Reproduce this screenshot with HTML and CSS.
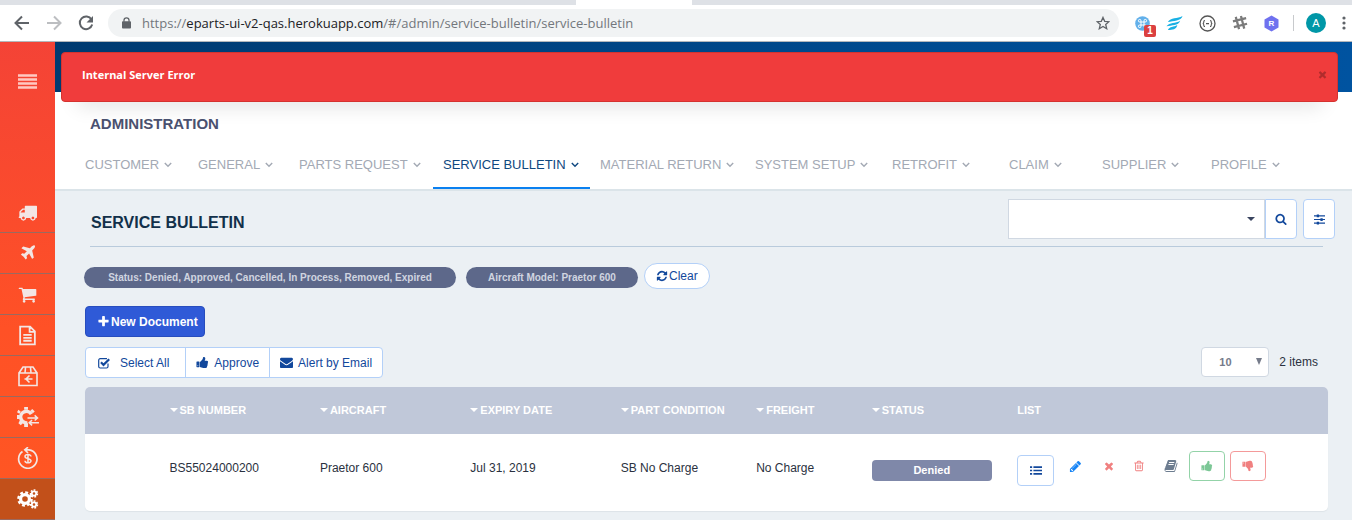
FILE: index.html
```html
<!DOCTYPE html>
<html lang="en">
<head>
<meta charset="utf-8">
<title>Service Bulletin</title>
<link rel="stylesheet" href="styles.css">
</head>
<body>
<svg class="defs" width="0" height="0" aria-hidden="true">
  <symbol id="i-truck" viewBox="0 0 1792 1792"><path d="M640 1408q0-52-38-90t-90-38-90 38-38 90 38 90 90 38 90-38 38-90zm-384-512h384v-256h-158q-13 0-22 9l-195 195q-9 9-9 22v30zm1280 512q0-52-38-90t-90-38-90 38-38 90 38 90 90 38 90-38 38-90zm256-1088v1024q0 15-4 26.500t-13.500 18.500-16.500 11.500-23.500 6-22.500 2-25.500 0-22.500-.5q0 106-75 181t-181 75-181-75-75-181h-384q0 106-75 181t-181 75-181-75-75-181h-64q-3 0-22.500.5t-25.500 0-22.500-2-23.500-6-16.500-11.500-13.500-18.500-4-26.500q0-26 19-45t45-19v-320q0-8-.5-35t0-38 2.500-34.500 6.500-37 14-30.500 22.500-30l198-198q19-19 50.500-32t58.500-13h160v-192q0-26 19-45t45-19h1024q26 0 45 19t19 45z"/></symbol>
  <symbol id="i-plane" viewBox="0 0 1792 1792"><path d="M1568 160q44 52 12 148t-108 172l-161 161 160 696q5 19-12 33l-128 96q-7 6-19 6-4 0-7-1-15-3-21-16l-279-508-259 259 53 194q5 17-8 31l-96 96q-9 9-23 9h-2q-15-2-24-13l-189-252-252-189q-11-7-13-23-1-13 9-25l96-97q9-9 23-9 6 0 8 1l194 53 259-259-508-279q-14-8-17-24-2-16 9-27l128-128q14-13 30-8l665 159 160-160q76-76 172-108t148 12z"/></symbol>
  <symbol id="i-cart" viewBox="0 0 1792 1792"><path d="M704 1536q0 52-38 90t-90 38-90-38-38-90 38-90 90-38 90 38 38 90zm896 0q0 52-38 90t-90 38-90-38-38-90 38-90 90-38 90 38 38 90zm128-1088v512q0 24-16.500 42.500t-40.500 21.500l-1044 122q13 60 13 70 0 16-24 64h920q26 0 45 19t19 45-19 45-45 19h-1024q-26 0-45-19t-19-45q0-11 8-31.500t16-36 21.500-40 15.500-29.500l-177-823h-204q-26 0-45-19t-19-45 19-45 45-19h256q16 0 28.500 6.500t19.500 15.500 13 24.500 8 26 5.500 29.500 4.500 26h1201q26 0 45 19t19 45z"/></symbol>
  <symbol id="i-file" viewBox="0 0 20 20"><path d="M3 1.500h9.500L17 6v12.500H3zM12 1.500V6.500h5M6 9.500h8M6 12.300h8M6 15h8" fill="none" stroke="currentColor" stroke-width="1.700"/></symbol>
  <symbol id="i-box" viewBox="0 0 22 22"><path d="M2 8h18v12.500H2zM2 8l4-6h10l4 6M8.500 2.500L8 8M13.500 2.500L14 8M7.500 14h8M12.500 10.500L9 14l3.500 3.500" fill="none" stroke="currentColor" stroke-width="1.600"/></symbol>
  <symbol id="i-gearswap" viewBox="0 0 24 22"><path d="M16 7.500A6 6 0 1 0 12 16.500" fill="none" stroke="currentColor" stroke-width="3.600"/><path d="M8.500 3V0h4v3M15 4l2-2 2.600 2.600-2 2M5 5L2.500 3 1 5.500 3.500 7M4 8.500H1v4h3M4 14l-1.500 3 2.500 2 2.500-2.500M8.500 17v4h4v-4" fill="currentColor"/><path d="M12 11.500h10M19.500 8.800l3 2.700-3 2.700M24 16.500H14M16.800 13.800l-3 2.700 3 2.700" fill="none" stroke="currentColor" stroke-width="1.600"/></symbol>
  <symbol id="i-refund" viewBox="0 0 22 22"><path d="M5.500 4.500A9.200 9.200 0 1 0 12 2.900H7.500M11 .2L7.800 2.900 11 6" fill="none" stroke="currentColor" stroke-width="1.700"/><path d="M14 9.500c0-2.600-6-2.600-6 .1 0 2.800 6 1.300 6 4.200 0 2.800-6 2.700-6 0M11 6.800v9.800" fill="none" stroke="currentColor" stroke-width="1.500"/></symbol>
  <symbol id="i-cogs" viewBox="0 0 22 20"><g fill="none" stroke="currentColor"><circle cx="8" cy="10" r="4.400" stroke-width="3.200"/><circle cx="8" cy="10" r="6.600" stroke-width="2.400" stroke-dasharray="2.900 2.284"/><circle cx="17" cy="4.500" r="2.200" stroke-width="1.800"/><circle cx="17" cy="4.500" r="3.500" stroke-width="1.500" stroke-dasharray="1.800 1.342"/><circle cx="17" cy="15.500" r="2.200" stroke-width="1.800"/><circle cx="17" cy="15.500" r="3.500" stroke-width="1.500" stroke-dasharray="1.800 1.342"/></g></symbol>
  <symbol id="i-pencil" viewBox="0 0 1792 1792"><path d="M491 1536l91-91-235-235-91 91v107h128v128h107zm523-928q0-22-22-22-10 0-17 7l-542 542q-7 7-7 17 0 22 22 22 10 0 17-7l542-542q7-7 7-17zm-54-192l416 416-832 832h-416v-416zm683 96q0 53-37 90l-166 166-416-416 166-165q36-38 90-38 53 0 91 38l235 234q37 39 37 91z"/></symbol>
  <symbol id="i-times" viewBox="0 0 1792 1792"><path d="M1490 1322q0 40-28 68l-136 136q-28 28-68 28t-68-28l-294-294-294 294q-28 28-68 28t-68-28l-136-136q-28-28-28-68t28-68l294-294-294-294q-28-28-28-68t28-68l136-136q28-28 68-28t68 28l294 294 294-294q28-28 68-28t68 28l136 136q28 28 28 68t-28 68l-294 294 294 294q28 28 28 68z"/></symbol>
  <symbol id="i-trash" viewBox="0 0 1792 1792"><path d="M704 736v576q0 14-9 23t-23 9h-64q-14 0-23-9t-9-23v-576q0-14 9-23t23-9h64q14 0 23 9t9 23zm256 0v576q0 14-9 23t-23 9h-64q-14 0-23-9t-9-23v-576q0-14 9-23t23-9h64q14 0 23 9t9 23zm256 0v576q0 14-9 23t-23 9h-64q-14 0-23-9t-9-23v-576q0-14 9-23t23-9h64q14 0 23 9t9 23zm128 724v-948h-896v948q0 22 7 40.500t14.500 27 10.500 8.500h832q3 0 10.500-8.500t14.500-27 7-40.500zm-672-1076h448l-48-117q-7-9-17-11h-317q-10 2-17 11zm928 32v64q0 14-9 23t-23 9h-96v948q0 83-47 143.500t-113 60.500h-832q-66 0-113-58.500t-47-141.500v-952h-96q-14 0-23-9t-9-23v-64q0-14 9-23t23-9h309l70-167q15-37 54-63t79-26h320q40 0 79 26t54 63l70 167h309q14 0 23 9t9 23z"/></symbol>
  <symbol id="i-book" viewBox="0 0 1792 1792"><path d="M1703 478q40 57 18 129l-275 906q-19 64-76.500 107.500t-122.500 43.500h-923q-77 0-148.500-53.500t-99.500-131.500q-24-67-2-127 0-4 3-27t4-37q1-8-3-21.500t-3-19.500q2-11 8-21t16.500-23.500 16.500-23.500q23-38 45-91.500t30-91.500q3-10 .5-30t-.5-28q3-11 17-28t17-23q21-36 42-92t25-90q1-9-2.500-32t.5-28q4-13 22-30.500t22-22.500q19-26 42.500-84.500t27.500-96.500q1-8-3-25.500t-2-26.500q2-8 9-18t18-23 17-21q8-12 16.500-30.500t15-35 16-36 19.500-32 26.500-23.500 36-11.500 47.500 5.500l-1 3q38-9 51-9h761q74 0 114 56t18 130l-274 906q-36 119-71.500 153.500t-128.500 34.500h-869q-27 0-38 15-11 16-1 43 24 70 144 70h923q29 0 56-15.500t35-41.500l300-987q7-22 5-57 38 15 59 43zm-1064 2q-4 13 2 22.500t20 9.500h608q13 0 25.500-9.500t16.500-22.500l21-64q4-13-2-22.500t-20-9.500h-608q-13 0-25.500 9.500t-16.500 22.500zm-83 256q-4 13 2 22.500t20 9.500h608q13 0 25.500-9.500t16.500-22.500l21-64q4-13-2-22.500t-20-9.500h-608q-13 0-25.500 9.500t-16.500 22.500z"/></symbol>
  <symbol id="i-thumb" viewBox="0 0 1792 1792"><path d="M320 1344q0-26-19-45t-45-19q-27 0-45.500 19t-18.500 45q0 27 18.500 45.500t45.500 18.500q26 0 45-18.500t19-45.500zm160-512v640q0 26-19 45t-45 19h-288q-26 0-45-19t-19-45v-640q0-26 19-45t45-19h288q26 0 45 19t19 45zm1184 0q0 86-55 149 15 44 15 76 3 76-43 137 17 56 0 117-15 57-54 94 9 112-49 181-64 76-197 78h-129q-66 0-144-15.500t-121.500-29-120.500-39.500q-123-43-158-44-26-1-45-19.500t-19-44.500v-641q0-25 18-43.500t43-20.500q24-2 76-59t101-121q68-87 101-120 18-18 31-48t17.500-48.500 13.500-60.500q7-39 12.500-61t19.500-52 34-50q19-19 45-19 46 0 82.500 10.500t60 26 40 40.500 24 45 12 50 5 45 .5 39q0 38-9.500 76t-19 60-27.500 56q-3 6-10 18t-11 22-8 24h277q78 0 135 57t57 135z"/></symbol>
  <symbol id="i-refresh" viewBox="0 0 1792 1792"><path d="M1639 1056q0 5-1 7-64 268-268 434.500t-478 166.500q-146 0-282.500-55t-243.500-157l-129 129q-19 19-45 19t-45-19-19-45v-448q0-26 19-45t45-19h448q26 0 45 19t19 45-19 45l-137 137q71 66 161 102t187 36q134 0 250-65t186-179q11-17 53-117 8-23 30-23h192q13 0 22.500 9.500t9.500 22.500zm25-800v448q0 26-19 45t-45 19h-448q-26 0-45-19t-19-45 19-45l138-138q-148-137-349-137-134 0-250 65t-186 179q-11 17-53 117-8 23-30 23h-199q-13 0-22.500-9.500t-9.500-22.500v-7q65-268 270-434.500t480-166.500q146 0 284 55.500t245 156.500l130-129q19-19 45-19t45 19 19 45z"/></symbol>
  <symbol id="i-plus" viewBox="0 0 1792 1792"><path d="M1600 736v192q0 40-28 68t-68 28h-416v416q0 40-28 68t-68 28h-192q-40 0-68-28t-28-68v-416h-416q-40 0-68-28t-28-68v-192q0-40 28-68t68-28h416v-416q0-40 28-68t68-28h192q40 0 68 28t28 68v416h416q40 0 68 28t28 68z"/></symbol>
  <symbol id="i-search" viewBox="0 0 1792 1792"><path d="M1216 832q0-185-131.500-316.500t-316.500-131.500-316.500 131.500-131.500 316.500 131.500 316.500 316.500 131.500 316.500-131.500 131.500-316.500zm512 832q0 52-38 90t-90 38q-54 0-90-38l-343-342q-179 124-399 124-143 0-273.500-55.500t-225-150-150-225-55.500-273.500 55.500-273.500 150-225 225-150 273.500-55.500 273.500 55.500 225 150 150 225 55.500 273.500q0 220-124 399l343 343q37 37 37 90z"/></symbol>
  <symbol id="i-envelope" viewBox="0 0 1792 1792"><path d="M1792 710v794q0 66-47 113t-113 47h-1472q-66 0-113-47t-47-113v-794q44 49 101 87 362 246 497 345 57 42 92.500 65.500t94.500 48 110 24.500h2q51 0 110-24.500t94.500-48 92.500-65.500q170-123 498-345 57-39 100-87zm0-294q0 79-49 151t-122 123q-376 261-468 325-10 7-42.500 30.500t-54 38-52 32.500-57.500 27-50 9h-2q-23 0-50-9t-57.500-27-52-32.500-54-38-42.500-30.500q-91-64-262-182.500t-205-142.500q-62-42-117-115.500t-55-136.500q0-78 41.500-130t118.500-52h1472q65 0 112.500 47t47.500 113z"/></symbol>
  <symbol id="i-check" viewBox="0 0 12 12"><path d="M10 6.500V9.500a1.500 1.500 0 0 1-1.500 1.500H2.200A1.500 1.500 0 0 1 .7 9.500V3.200A1.500 1.500 0 0 1 2.200 1.700H9" fill="none" stroke="currentColor" stroke-width="1.200"/><path d="M3 5.300l2.500 2.600 5.700-5.700" fill="none" stroke="currentColor" stroke-width="2.200"/></symbol>
  <symbol id="i-sliders" viewBox="0 0 12 12"><path d="M0 2h12M0 6h12M0 10h12" stroke="currentColor" stroke-width="1.200"/><path d="M3 .5h2.500v3H3zM7 4.500h2.500v3H7zM3 8.500h2.500v3H3z"/></symbol>
  <symbol id="i-list" viewBox="0 0 14 12"><path d="M0 1h2.500v2H0zM4 1h10v2H4zM0 5h2.500v2H0zM4 5h10v2H4zM0 9h2.500v2H0zM4 9h10v2H4z"/></symbol>
  <symbol id="i-chevron" viewBox="0 0 8 6"><path d="M.8 1L4 4.300 7.200 1" fill="none" stroke="currentColor" stroke-width="1.400"/></symbol>
  <symbol id="i-caret" viewBox="0 0 8 4"><path d="M0 0h8L4 4z"/></symbol>
  <symbol id="i-down" viewBox="0 0 6 7"><path d="M0 0h6L3 7z"/></symbol>
</svg>

<header class="browser">
  <div class="tabstrip"><span class="tab"></span></div>
  <div class="toolbar">
    <button class="tool" aria-label="Back"><svg width="16" height="16" viewBox="0 0 16 16"><path d="M15 8H2M8 1.500L1.500 8 8 14.500" fill="none" stroke="#5f6368" stroke-width="2"/></svg></button>
    <button class="tool" aria-label="Forward"><svg width="16" height="16" viewBox="0 0 16 16"><path d="M1 8h13M8 1.500L14.500 8 8 14.500" fill="none" stroke="#bcbec1" stroke-width="2"/></svg></button>
    <button class="tool" aria-label="Reload"><svg width="16" height="16" viewBox="0 0 16 16"><path d="M13.500 4.500A6.300 6.300 0 1 0 14.200 9.500" fill="none" stroke="#5f6368" stroke-width="2"/><path d="M15 1v6.500H8.500z" fill="#5f6368"/></svg></button>
    <div class="omnibox">
      <svg width="9" height="12" viewBox="0 0 10 13"><rect x="0" y="4.500" width="10" height="8" rx="1" fill="#5f6368"/><path d="M2.200 5V3.500a2.800 2.800 0 0 1 5.600 0V5" fill="none" stroke="#5f6368" stroke-width="1.400"/></svg>
      <div class="url" role="textbox" aria-label="Address">https://<span class="host">eparts-ui-v2-qas.herokuapp.com</span>/#/admin/service-bulletin/service-bulletin</div>
      <button class="tool" aria-label="Bookmark"><svg width="14" height="14" viewBox="0 0 14 14"><path d="M7 1.400l1.700 3.900 4.200.4-3.200 2.800 1 4.200L7 10.500l-3.700 2.200 1-4.200L1.100 5.700l4.200-.4z" fill="none" stroke="#5f6368" stroke-width="1.300"/></svg></button>
    </div>
    <div class="extensions">
      <button class="tool command" aria-label="Command"><svg width="15" height="15" viewBox="0 0 15 15"><circle cx="7.500" cy="7.500" r="7.300" fill="#62b0ea"/><path d="M6 6h3v3H6zM6 6H4.800A1.300 1.300 0 1 1 6 4.800zM9 6V4.800A1.300 1.300 0 1 1 10.200 6zM9 9h1.200A1.300 1.300 0 1 1 9 10.200zM6 9v1.200A1.300 1.300 0 1 1 4.800 9z" fill="none" stroke="#fff" stroke-width="1"/></svg><span class="count">1</span></button>
      <button class="tool" aria-label="Wing"><svg width="17" height="16" viewBox="0 0 18 16"><path d="M2 7C5 1.500 12 4 17.500 .5 16 6 8 5.500 2 7zM.5 11.500C4 6.500 10 9 15 5.500 13 11 6 10 .5 11.500zM2 15.500c2-4.500 6-3 10-5.500-1 5-5 5-10 5.500z" fill="#18b0e4"/></svg></button>
      <button class="tool" aria-label="Script"><svg width="17" height="17" viewBox="0 0 17 17"><circle cx="8.500" cy="8.500" r="7.500" fill="none" stroke="#555" stroke-width="1.300"/><path d="M6 5.500q-1.300 0-1.200 1.500 0 1.300-1 1.500 1 .2 1 1.500-.1 1.500 1.200 1.500M11 5.500q1.300 0 1.200 1.500 0 1.300 1 1.500-1 .2-1 1.500.1 1.500-1.200 1.500M7 8.600h3" fill="none" stroke="#555" stroke-width="1.100"/></svg></button>
      <button class="tool" aria-label="Grid"><svg width="16" height="16" viewBox="0 0 17 17"><path d="M4 2l3.500 13M9.500 1L13 14.500M1 6.800L15 3.300M2 12.800l14-3.500" stroke="#7b7b7b" stroke-width="2.400"/></svg></button>
      <button class="tool" aria-label="R extension"><svg width="15" height="17" viewBox="0 0 15 17"><path d="M7.500.5l7 4v8l-7 4-7-4v-8z" fill="#6f71ef"/></svg><span class="hex">R</span></button>
      <span class="divider"></span>
      <button class="avatar">A</button>
      <button class="tool" aria-label="Menu"><svg width="4" height="14" viewBox="0 0 4 14"><g fill="#5f6368"><circle cx="2" cy="2" r="1.600"/><circle cx="2" cy="7" r="1.600"/><circle cx="2" cy="12" r="1.600"/></g></svg></button>
    </div>
  </div>
</header>

<div class="app">
  <nav class="sidebar" aria-label="Modules">
    <button class="menu" aria-label="Toggle menu"><svg width="19" height="15" viewBox="0 0 19 15"><path d="M0 1.500h19M0 5.500h19M0 9.500h19M0 13.500h19" stroke="#ffc9c2" stroke-width="2.600"/></svg></button>
    <a href="#truck" aria-label="Shipping"><svg width="19" height="19"><use href="#i-truck"/></svg></a>
    <a href="#plane" aria-label="Aircraft"><svg width="18" height="18"><use href="#i-plane"/></svg></a>
    <a href="#cart" aria-label="Cart"><svg width="19" height="19"><use href="#i-cart"/></svg></a>
    <a href="#file" aria-label="Documents"><svg width="21" height="21"><use href="#i-file"/></svg></a>
    <a href="#box" aria-label="Returns"><svg width="22" height="22"><use href="#i-box"/></svg></a>
    <a href="#gear" aria-label="Exchange"><svg width="23" height="21"><use href="#i-gearswap"/></svg></a>
    <a href="#refund" aria-label="Refunds"><svg width="22" height="22"><use href="#i-refund"/></svg></a>
    <a href="#admin" class="current" aria-label="Administration"><svg width="22" height="20"><use href="#i-cogs"/></svg></a>
  </nav>

  <div class="main">
    <div class="banner"></div>
    <div class="alert" role="alert"><strong>Internal Server Error</strong><button class="close" aria-label="Close"><svg width="11" height="11"><use href="#i-times"/></svg></button></div>

    <section class="admin">
      <h2>ADMINISTRATION</h2>
      <nav class="tabs" aria-label="Administration">
        <a href="#customer">CUSTOMER<svg width="8" height="6"><use href="#i-chevron"/></svg></a>
        <a href="#general">GENERAL<svg width="8" height="6"><use href="#i-chevron"/></svg></a>
        <a href="#parts">PARTS REQUEST<svg width="8" height="6"><use href="#i-chevron"/></svg></a>
        <a href="#bulletin" class="current">SERVICE BULLETIN<svg width="8" height="6"><use href="#i-chevron"/></svg></a>
        <a href="#material">MATERIAL RETURN<svg width="8" height="6"><use href="#i-chevron"/></svg></a>
        <a href="#system">SYSTEM SETUP<svg width="8" height="6"><use href="#i-chevron"/></svg></a>
        <a href="#retrofit">RETROFIT<svg width="8" height="6"><use href="#i-chevron"/></svg></a>
        <a href="#claim">CLAIM<svg width="8" height="6"><use href="#i-chevron"/></svg></a>
        <a href="#supplier">SUPPLIER<svg width="8" height="6"><use href="#i-chevron"/></svg></a>
        <a href="#profile">PROFILE<svg width="8" height="6"><use href="#i-chevron"/></svg></a>
      </nav>
    </section>

    <main class="content">
      <div class="page-head">
        <h1>SERVICE BULLETIN</h1>
        <div class="search">
          <div class="select combo"><select aria-label="Search bulletins"><option></option></select><svg width="8" height="4"><use href="#i-caret"/></svg></div>
          <button class="btn icon-btn joined" aria-label="Search"><svg width="12" height="12"><use href="#i-search"/></svg></button>
          <button class="btn icon-btn" aria-label="Filters"><svg width="11" height="11"><use href="#i-sliders"/></svg></button>
        </div>
      </div>
      <hr>
      <div class="chips">
        <span class="chip chip-status">Status: Denied, Approved, Cancelled, In Process, Removed, Expired</span>
        <span class="chip chip-model">Aircraft Model: Praetor 600</span>
        <button class="btn clear"><svg width="12" height="12"><use href="#i-refresh"/></svg>Clear</button>
      </div>
      <button class="new"><svg width="13" height="13"><use href="#i-plus"/></svg>New Document</button>
      <div class="bar">
        <div class="group">
          <button class="btn select-all"><svg width="12" height="12"><use href="#i-check"/></svg>Select All</button>
          <button class="btn"><svg width="13" height="13"><use href="#i-thumb"/></svg>Approve</button>
          <button class="btn"><svg width="13" height="13"><use href="#i-envelope"/></svg>Alert by Email</button>
        </div>
        <div class="paging">
          <div class="select size"><select id="size" aria-label="Items per page"><option>10</option></select><svg width="6" height="7"><use href="#i-down"/></svg></div>
          <label for="size">2 items</label>
        </div>
      </div>
      <table class="grid">
        <colgroup><col class="c-check"><col class="c-wide"><col class="c-wide"><col class="c-wide"><col class="c-condition"><col class="c-freight"><col class="c-status"><col></colgroup>
        <thead>
          <tr>
            <th></th>
            <th><svg width="8" height="4"><use href="#i-caret"/></svg>SB NUMBER</th>
            <th><svg width="8" height="4"><use href="#i-caret"/></svg>AIRCRAFT</th>
            <th><svg width="8" height="4"><use href="#i-caret"/></svg>EXPIRY DATE</th>
            <th><svg width="8" height="4"><use href="#i-caret"/></svg>PART CONDITION</th>
            <th><svg width="8" height="4"><use href="#i-caret"/></svg>FREIGHT</th>
            <th><svg width="8" height="4"><use href="#i-caret"/></svg>STATUS</th>
            <th>LIST</th>
          </tr>
        </thead>
        <tbody>
          <tr>
            <td></td>
            <td>BS55024000200</td>
            <td>Praetor 600</td>
            <td>Jul 31, 2019</td>
            <td>SB No Charge</td>
            <td>No Charge</td>
            <td><span class="status">Denied</span></td>
            <td>
              <div class="actions">
                <button class="btn list" aria-label="List"><svg width="12" height="11"><use href="#i-list"/></svg></button>
                <button class="act edit" aria-label="Edit"><svg width="13" height="13"><use href="#i-pencil"/></svg></button>
                <button class="act cancel" aria-label="Cancel"><svg width="12" height="12"><use href="#i-times"/></svg></button>
                <button class="act remove" aria-label="Delete"><svg width="12" height="12"><use href="#i-trash"/></svg></button>
                <button class="act book" aria-label="History"><svg width="14" height="14"><use href="#i-book"/></svg></button>
                <button class="btn vote yes" aria-label="Approve"><svg width="12" height="12"><use href="#i-thumb"/></svg></button>
                <button class="btn vote no" aria-label="Deny"><svg width="12" height="12"><use href="#i-thumb"/></svg></button>
              </div>
            </td>
          </tr>
        </tbody>
      </table>
    </main>
  </div>
</div>
</body>
</html>
```
FILE: styles.css
```css
* { box-sizing: border-box; }
body {
  margin: 0;
  font-family: "Liberation Sans", Arial, sans-serif;
  font-size: 12px;
  background: #ebf0f4;
  color: #2a3140;
}
button, select { font: inherit; color: inherit; }
button { background: none; border: 0; padding: 0; cursor: pointer; }
a { text-decoration: none; color: inherit; }
svg { display: block; fill: currentColor; flex: none; }
.defs { position: absolute; }

/* Browser bar */
.browser { background: #fff; border-bottom: 1px solid #b4b7bb; }
.tabstrip { display: flex; height: 5px; padding-left: 576px; background: #dee1e6; }
.tab { width: 116px; background: #fff; }
.toolbar { display: flex; align-items: center; height: 36px; padding: 4px 6px 4px 14px; gap: 16px; }
.tool { position: relative; display: flex; align-items: center; justify-content: center; }
.omnibox {
  flex: 1;
  display: flex;
  align-items: center;
  gap: 11px;
  height: 28px;
  margin-left: -2px;
  padding: 0 9px 0 14px;
  border-radius: 14px;
  background: #f1f3f4;
}
.url { flex: 1; font-family: "Open Sans", "Noto Sans", sans-serif; font-size: 13px; color: #73777c; white-space: nowrap; }
.host { color: #202124; }
.extensions { display: flex; align-items: center; gap: 16px; }
.count {
  position: absolute;
  left: 9px;
  top: 9px;
  width: 12px;
  height: 12px;
  border-radius: 2px;
  background: #db4040;
  color: #fff;
  font-size: 10px;
  font-weight: bold;
  line-height: 12px;
}
.hex { position: absolute; inset: 0; color: #fff; font-size: 8px; font-weight: bold; line-height: 17px; text-align: center; }
.divider { width: 1px; height: 16px; background: #c8cacd; margin: 0 -4px 0 -2px; }
.avatar { width: 20px; height: 20px; border-radius: 50%; background: #0097a7; color: #fff; font-size: 11px; line-height: 20px; }

/* Shell */
.app { display: flex; }
.sidebar { flex: none; width: 55px; background: linear-gradient(#f44336, #ff5126 60%, #ff5722); color: #f3e6e4; }
.menu { display: flex; justify-content: center; width: 100%; height: 150px; padding-top: 32px; }
.sidebar a { display: flex; align-items: center; justify-content: center; height: 41px; border-bottom: 1px solid #9a6a60; }
.sidebar .current { background: #c2501a; color: #fff; }
.main { position: relative; flex: 1; min-width: 0; }
.banner { height: 50px; background: linear-gradient(90deg, #003a70, #0053a0); }
.alert {
  position: absolute;
  top: 10px;
  left: 6px;
  right: 14px;
  height: 50px;
  display: flex;
  align-items: center;
  justify-content: space-between;
  padding: 0 9px 5px 20px;
  border: 1px solid #d5322f;
  border-radius: 4px;
  background: #f03c3c;
  color: #fff;
  font-family: "Open Sans", "Noto Sans", sans-serif;
  font-size: 11px;
  box-shadow: 0 20px 20px -16px rgba(0, 0, 0, .12);
}
.close { color: #b02c2c; }

/* Administration tabs */
.admin { background: #fff; border-bottom: 2px solid #dbe4e9; padding-top: 22px; }
.admin h2 { margin: 0 35px; font-size: 15px; line-height: 20px; color: #4a5170; }
.tabs {
  display: grid;
  grid-template-columns: 113fr 101fr 144fr 157fr 155fr 137fr 117fr 93fr 109fr 90fr;
  padding: 6px 61px 0 20px;
  font-size: 13px;
  color: #a3a9b4;
}
.tabs a { display: flex; align-items: center; gap: 5px; height: 49px; padding: 2px 0 0 10px; border-bottom: 2px solid transparent; white-space: nowrap; }
.tabs .current { color: #0f4880; border-color: #0a80f0; }

/* Page */
.content { padding: 8px 17px 8px 30px; }
.page-head { display: flex; align-items: center; justify-content: space-between; }
h1 { margin: 0 0 0 6px; font-size: 16px; line-height: 20px; color: #12304a; padding-top: 8px; }
.search { display: flex; }
.btn {
  display: inline-flex;
  align-items: center;
  justify-content: center;
  border: 1px solid #b3d0f8;
  border-radius: 4px;
  background: #fff;
  color: #12489c;
}
.select { position: relative; }
.select select { appearance: none; width: 100%; height: 100%; border: 1px solid #d0d8e2; background: #fff; }
.select svg { position: absolute; top: 50%; pointer-events: none; }
.combo { width: 257px; height: 40px; }
.combo svg { right: 10px; margin-top: -2px; color: #3a4560; }
.icon-btn { width: 32px; height: 40px; }
.joined { border-radius: 0 4px 4px 0; margin-right: 6px; }
hr { margin: 7px 12px 0 5px; border: 0; border-top: 1px solid #b9cbdc; }
.chips { display: flex; align-items: center; margin-top: 16px; }
.chip {
  height: 21px;
  border-radius: 11px;
  margin: 2px 10px 0 0;
  background: #5d688a;
  color: #d0d5e0;
  font-size: 10px;
  font-weight: bold;
  line-height: 21px;
  text-align: center;
}
.chip-status { width: 372px; margin-left: -1px; }
.chip-model { width: 172px; margin-right: 6px; }
.clear { height: 26px; padding: 0 11px; border-radius: 13px; gap: 1px; }
.new {
  display: flex;
  align-items: center;
  gap: 1px;
  height: 31px;
  margin-top: 17px;
  padding: 0 6px 0 11px;
  border: 1px solid #274dbd;
  border-radius: 4px;
  background: #2f5ad7;
  color: #fff;
  font-weight: bold;
}
.bar { display: flex; justify-content: space-between; margin: 10px 17px 0 0; }
.group { display: flex; height: 31px; }
.group .btn { padding: 0 10px; gap: 5px; border-radius: 0; margin-right: -1px; }
.group .btn:first-child { border-radius: 4px 0 0 4px; }
.group .btn:last-child { border-radius: 0 4px 4px 0; }
.group .select-all { gap: 10px; padding: 0 16px 0 12px; }
.paging { display: flex; align-items: center; gap: 10px; height: 30px; }
.size { width: 68px; height: 30px; font-size: 11px; color: #757b8a; font-weight: bold; }
.size select { border-radius: 4px; padding: 0 17px; }
.size svg { right: 7px; margin-top: -4px; }

/* Results */
.grid {
  width: calc(100% - 7px);
  margin-top: 9px;
  table-layout: fixed;
  border-spacing: 0;
  border-radius: 5px;
  overflow: hidden;
  background: #fff;
  box-shadow: 0 1px 1px #dde3e8;
}
.c-check { width: 6.8%; }
.c-wide { width: 12.1%; }
.c-condition { width: 10.9%; }
.c-freight { width: 9.3%; }
.c-status { width: 11.7%; }
th, td { padding: 0; text-align: left; }
th { height: 47px; padding-bottom: 2px; background: #c0c8d9; color: #fff; font-size: 11px; }
th svg { display: inline-block; margin: 0 2px 2px 0; vertical-align: middle; }
td { height: 77px; padding-top: 17px; line-height: 34px; vertical-align: top; }
.status {
  display: block;
  width: 120px;
  height: 21px;
  margin-top: 9px;
  border-radius: 4px;
  background: #7f88a9;
  color: #fff;
  font-size: 11px;
  font-weight: bold;
  line-height: 21px;
  text-align: center;
}
.actions { display: flex; align-items: flex-start; }
.list { width: 37px; height: 31px; margin: 4px 6px 0 0; }
.act { display: flex; align-items: center; justify-content: center; width: 30px; height: 30px; }
.edit { color: #1583f5; margin-right: 4px; }
.cancel, .remove { color: #f08080; }
.book { color: #6d7d90; width: 34px; margin-right: 1px; }
.vote { width: 36px; height: 30px; }
.yes { color: #7cc796; border-color: #93d3a8; margin-right: 5px; }
.no { color: #f08080; border-color: #f49a9a; }
.no svg { transform: scaleY(-1); }
```
